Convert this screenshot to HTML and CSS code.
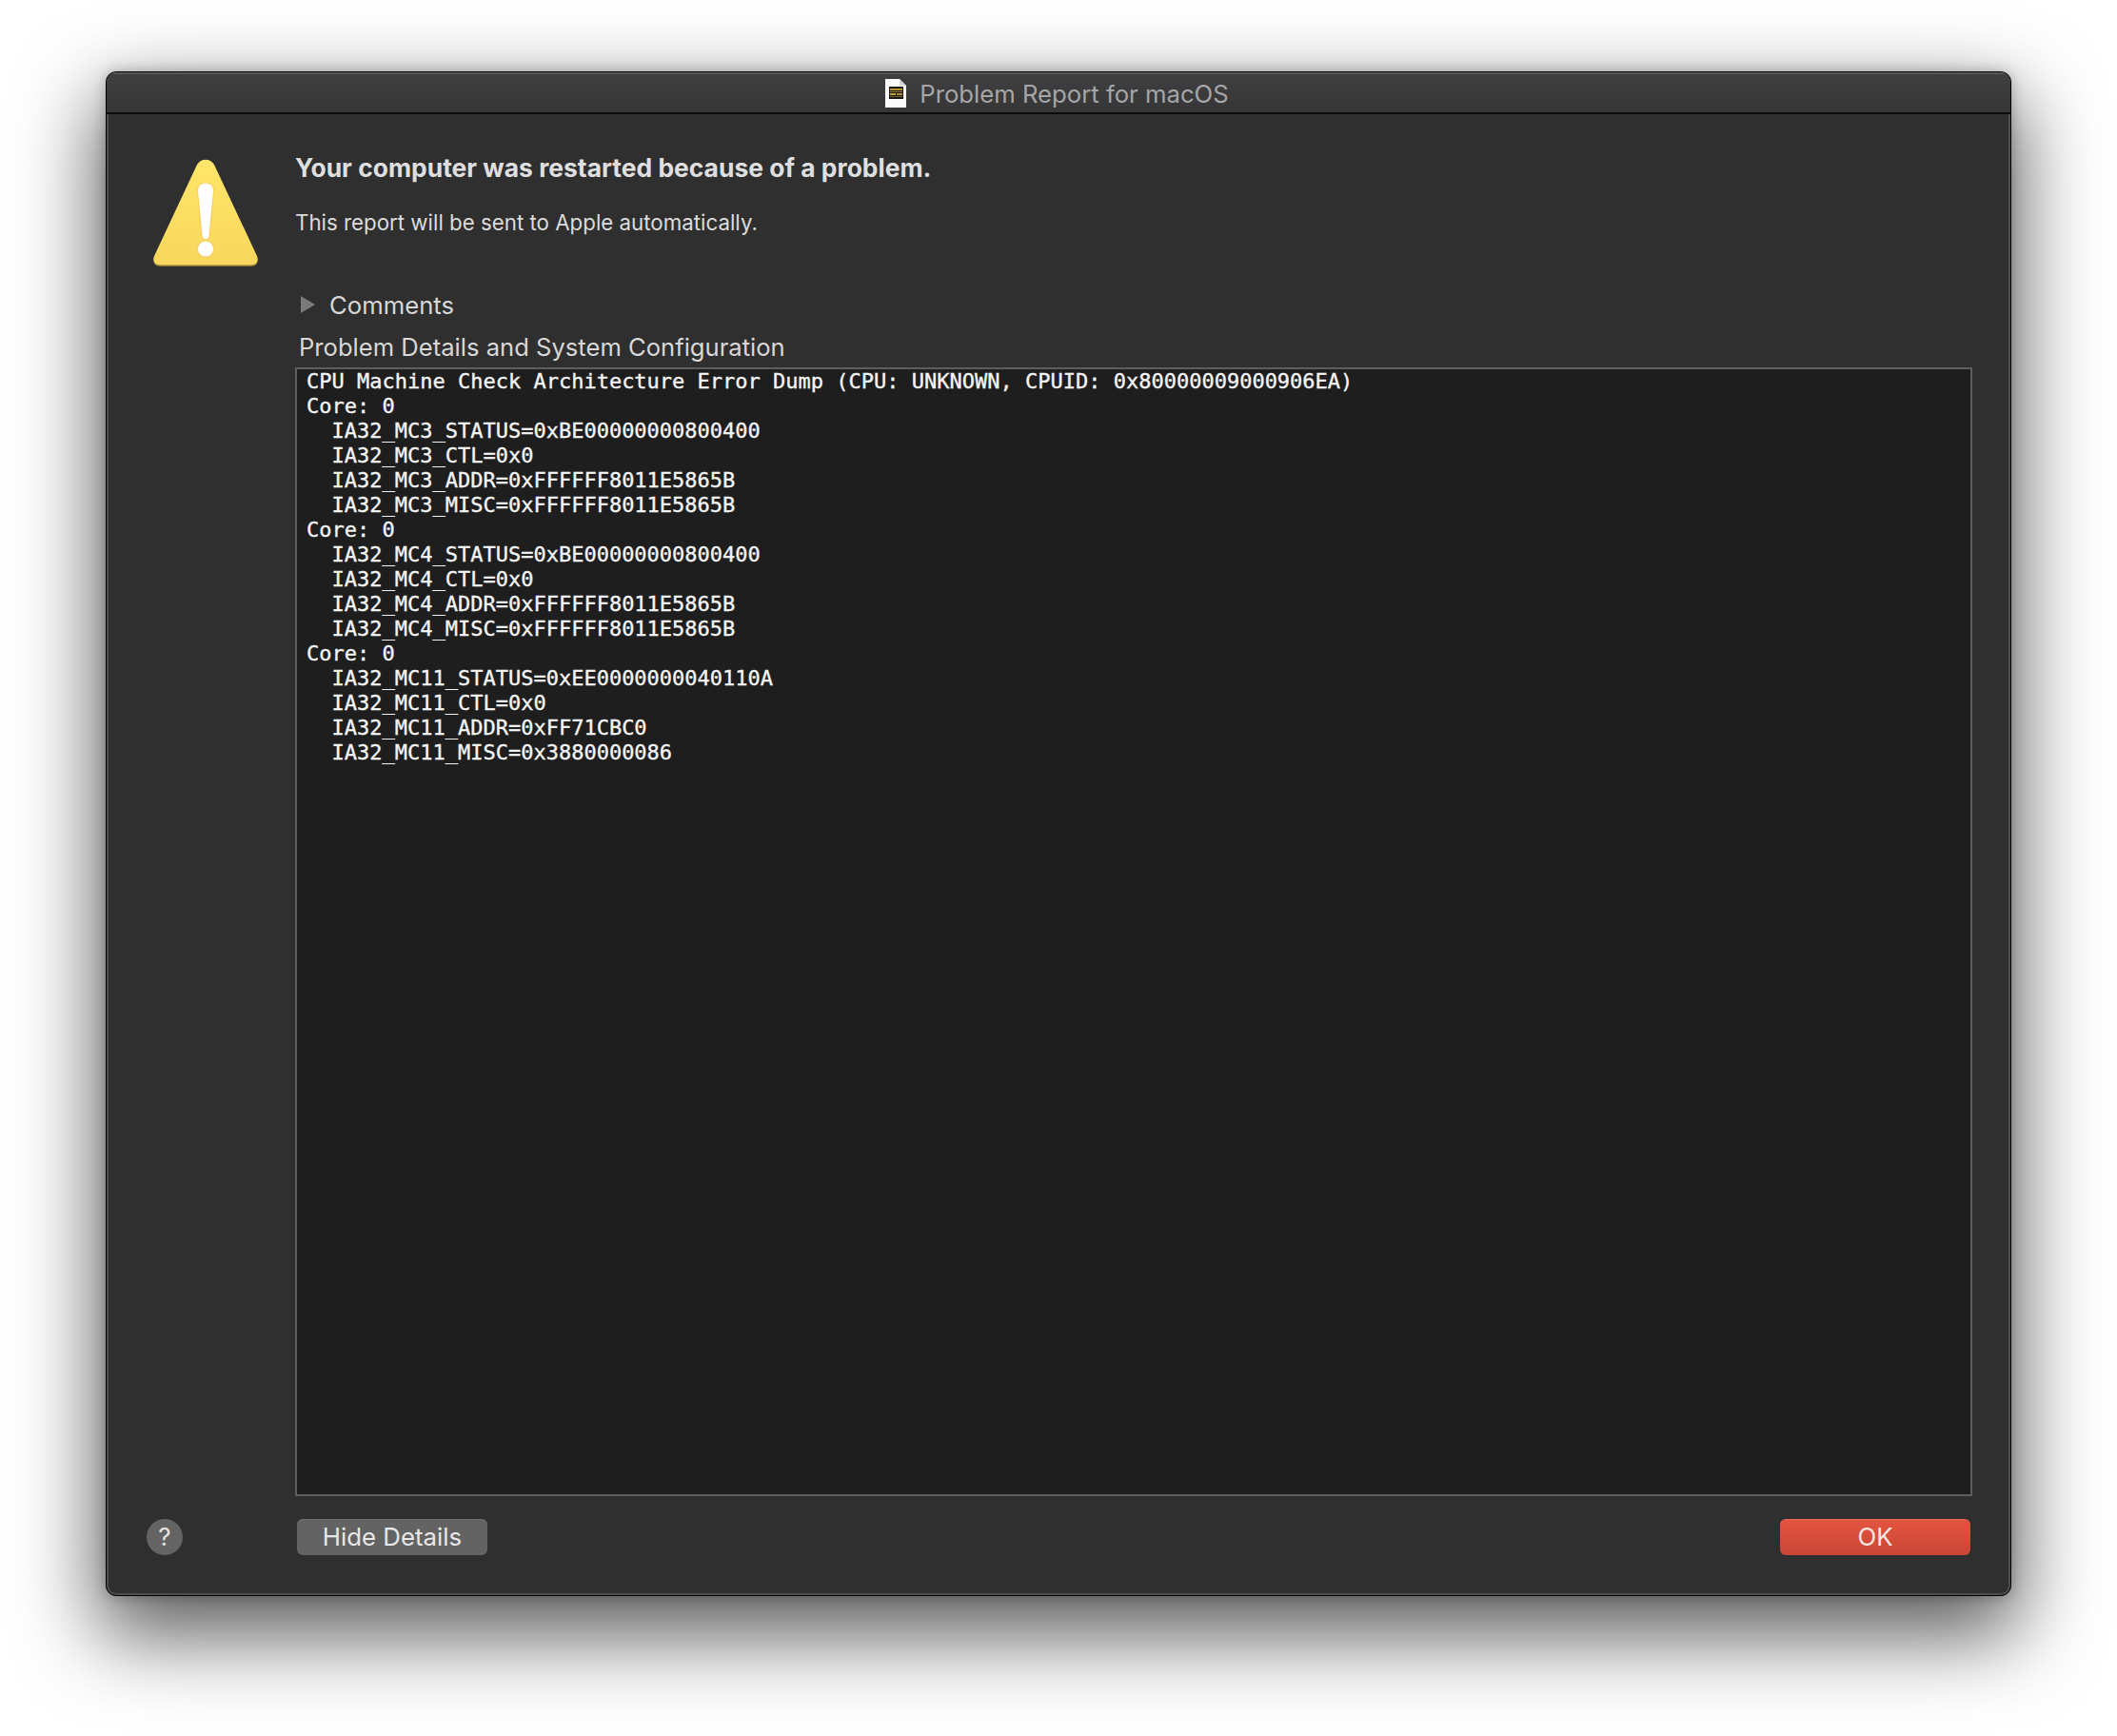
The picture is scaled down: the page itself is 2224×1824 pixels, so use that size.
FILE: index.html
```html
<!DOCTYPE html>
<html lang="en">
<head>
<meta charset="utf-8">
<title>Problem Report for macOS</title>
<link rel="stylesheet" href="styles.css">
</head>
<body>
<div class="window">
  <header class="titlebar">
    <svg class="doc-icon" width="22" height="30" viewBox="0 0 22 30">
      <path d="M0 0H15L22 7V30H0Z" fill="#fbfbfb"/>
      <path d="M15 0V7H22Z" fill="#d4d4d4"/>
      <rect x="4" y="8" width="15" height="13" fill="#1d1b14"/>
      <rect x="5" y="10" width="13" height="2" fill="#b8952c"/>
      <rect x="5" y="13" width="13" height="1" fill="#8d7a34"/>
      <rect x="5" y="15" width="6" height="2" fill="#c2a033"/>
      <rect x="12" y="15" width="6" height="2" fill="#a88c30"/>
      <rect x="5" y="18" width="13" height="1" fill="#6d5f2c"/>
    </svg>
    <span class="title">Problem Report for macOS</span>
  </header>
  <div class="body">
    <div class="top">
      <div class="icon-col">
        <svg class="warn" width="114" height="116" viewBox="0 0 114 116">
          <defs>
            <linearGradient id="wg" x1="0" y1="0" x2="0" y2="1">
              <stop offset="0" stop-color="#ffe668"/>
              <stop offset="1" stop-color="#f8d65c"/>
            </linearGradient>
          </defs>
          <path d="M48 6C52-1 62-1 66 6L111 102C113 107 110.500 111.500 105 111.500H9C3.500 111.500 1 107 3 102Z" fill="#caa63a" transform="translate(0 1.500)" opacity=".55"/>
          <path d="M48 6C52-1 62-1 66 6L111 102C113 107 110.500 111.500 105 111.500H9C3.500 111.500 1 107 3 102Z" fill="url(#wg)"/>
          <path d="M57 25C62 25 65.500 28.500 65.500 33.500L61 80C60.700 83 59.500 84.500 57 84.500C54.500 84.500 53.300 83 53 80L48.500 33.500C48.500 28.500 52 25 57 25Z" fill="#fff" stroke="#f5c24e" stroke-width=".8"/>
          <circle cx="57" cy="94.500" r="8.500" fill="#fff" stroke="#f5c24e" stroke-width=".8"/>
        </svg>
      </div>
      <div class="main-col">
        <h1 class="headline">Your computer was restarted because of a problem.</h1>
        <p class="sub">This report will be sent to Apple automatically.</p>
        <div class="disclosure">
          <span class="triangle"></span>
          <span class="comments">Comments</span>
        </div>
        <div class="details-label">Problem Details and System Configuration</div>
        <pre class="dump">CPU Machine Check Architecture Error Dump (CPU: UNKNOWN, CPUID: 0x80000009000906EA)
Core: 0
  IA32_MC3_STATUS=0xBE00000000800400
  IA32_MC3_CTL=0x0
  IA32_MC3_ADDR=0xFFFFFF8011E5865B
  IA32_MC3_MISC=0xFFFFFF8011E5865B
Core: 0
  IA32_MC4_STATUS=0xBE00000000800400
  IA32_MC4_CTL=0x0
  IA32_MC4_ADDR=0xFFFFFF8011E5865B
  IA32_MC4_MISC=0xFFFFFF8011E5865B
Core: 0
  IA32_MC11_STATUS=0xEE0000000040110A
  IA32_MC11_CTL=0x0
  IA32_MC11_ADDR=0xFF71CBC0
  IA32_MC11_MISC=0x3880000086</pre>
      </div>
    </div>
    <footer class="footer">
      <div class="help-col"><button class="help" type="button">?</button></div>
      <div class="actions">
        <button class="btn" type="button">Hide Details</button>
        <button class="btn btn-ok" type="button">OK</button>
      </div>
    </footer>
  </div>
</div>
</body>
</html>
```
FILE: styles.css
```css
* { box-sizing: border-box; }
html, body { margin: 0; padding: 0; }
body {
  width: 2224px;
  height: 1824px;
  overflow: hidden;
  background: #fff;
  padding: 75px 111px 0;
  font-family: Inter, "Noto Sans", sans-serif;
}
.window {
  width: 2002px;
  height: 1602px;
  display: flex;
  flex-direction: column;
  background: #2f2f2f;
  border: 1px solid #000;
  border-radius: 11px;
  box-shadow: inset 0 0 0 2px #4e4e4e, 0 34px 85px 8px rgba(0, 0, 0, .64), 0 0 14px rgba(0, 0, 0, .25);
  overflow: hidden;
}
.titlebar {
  height: 44px;
  flex: none;
  display: flex;
  align-items: center;
  justify-content: center;
  gap: 14px;
  padding-right: 3px;
  background: linear-gradient(#3f3f41, #363637);
  border-top: 2px solid #565656;
  border-bottom: 2px solid #0c0c0c;
}
.title { font-size: 25.7px; color: #a6a6a6; }
.doc-icon { display: block; }
.body {
  flex: 1;
  min-height: 0;
  display: flex;
  flex-direction: column;
  padding: 0 40px 42px 42px;
}
.top { flex: 1; min-height: 0; display: flex; }
.icon-col { width: 156px; flex: none; padding: 47px 0 0 5px; }
.warn { display: block; }
.main-col { flex: 1; min-width: 0; display: flex; flex-direction: column; padding-top: 40px; }
.headline { margin: 0; font-size: 26.45px; line-height: 32px; font-weight: 700; color: #dfdfdf; }
.sub { margin: 27px 0 0; font-size: 22.3px; line-height: 30px; color: #dcdcdc; }
.disclosure { display: flex; align-items: center; margin-top: 55px; height: 32px; padding-left: 6px; }
.triangle {
  width: 0;
  height: 0;
  border-left: 15px solid #7a7a7a;
  border-top: 9px solid transparent;
  border-bottom: 9px solid transparent;
}
.comments { margin-left: 15px; font-size: 25.7px; color: #d8d8d8; }
.details-label { margin: 13px 0 5px 4px; font-size: 25.6px; line-height: 32px; color: #d8d8d8; }
.dump {
  flex: 1;
  min-height: 0;
  margin: 0;
  padding: 0 0 0 10px;
  background: #1e1e1e;
  border: 2px solid #5e5e5e;
  font-family: "DejaVu Sans Mono", monospace;
  font-size: 22px;
  line-height: 26px;
  color: #f5f5f5;
  -webkit-text-stroke: .35px #f5f5f5;
}
.footer { flex: none; display: flex; align-items: center; margin-top: 24px; height: 38px; }
.help-col { width: 156px; flex: none; }
.help {
  width: 38px;
  height: 38px;
  padding: 0;
  border: 0;
  border-radius: 50%;
  background: #646464;
  color: #e4e4e4;
  font: 400 26px/38px Inter, sans-serif;
}
.actions { flex: 1; display: flex; justify-content: space-between; padding: 0 2px; }
.btn {
  width: 200px;
  height: 38px;
  padding: 0 0 2px;
  border: 0;
  border-top: 1px solid #6f6f6f;
  border-radius: 6px;
  background: #636363;
  color: #e8e8e8;
  font: 400 25.8px/34px Inter, sans-serif;
}
.btn-ok {
  border-top-color: #e96b58;
  background: linear-gradient(#e35440, #c94636);
  color: #f6e6e3;
}
```
